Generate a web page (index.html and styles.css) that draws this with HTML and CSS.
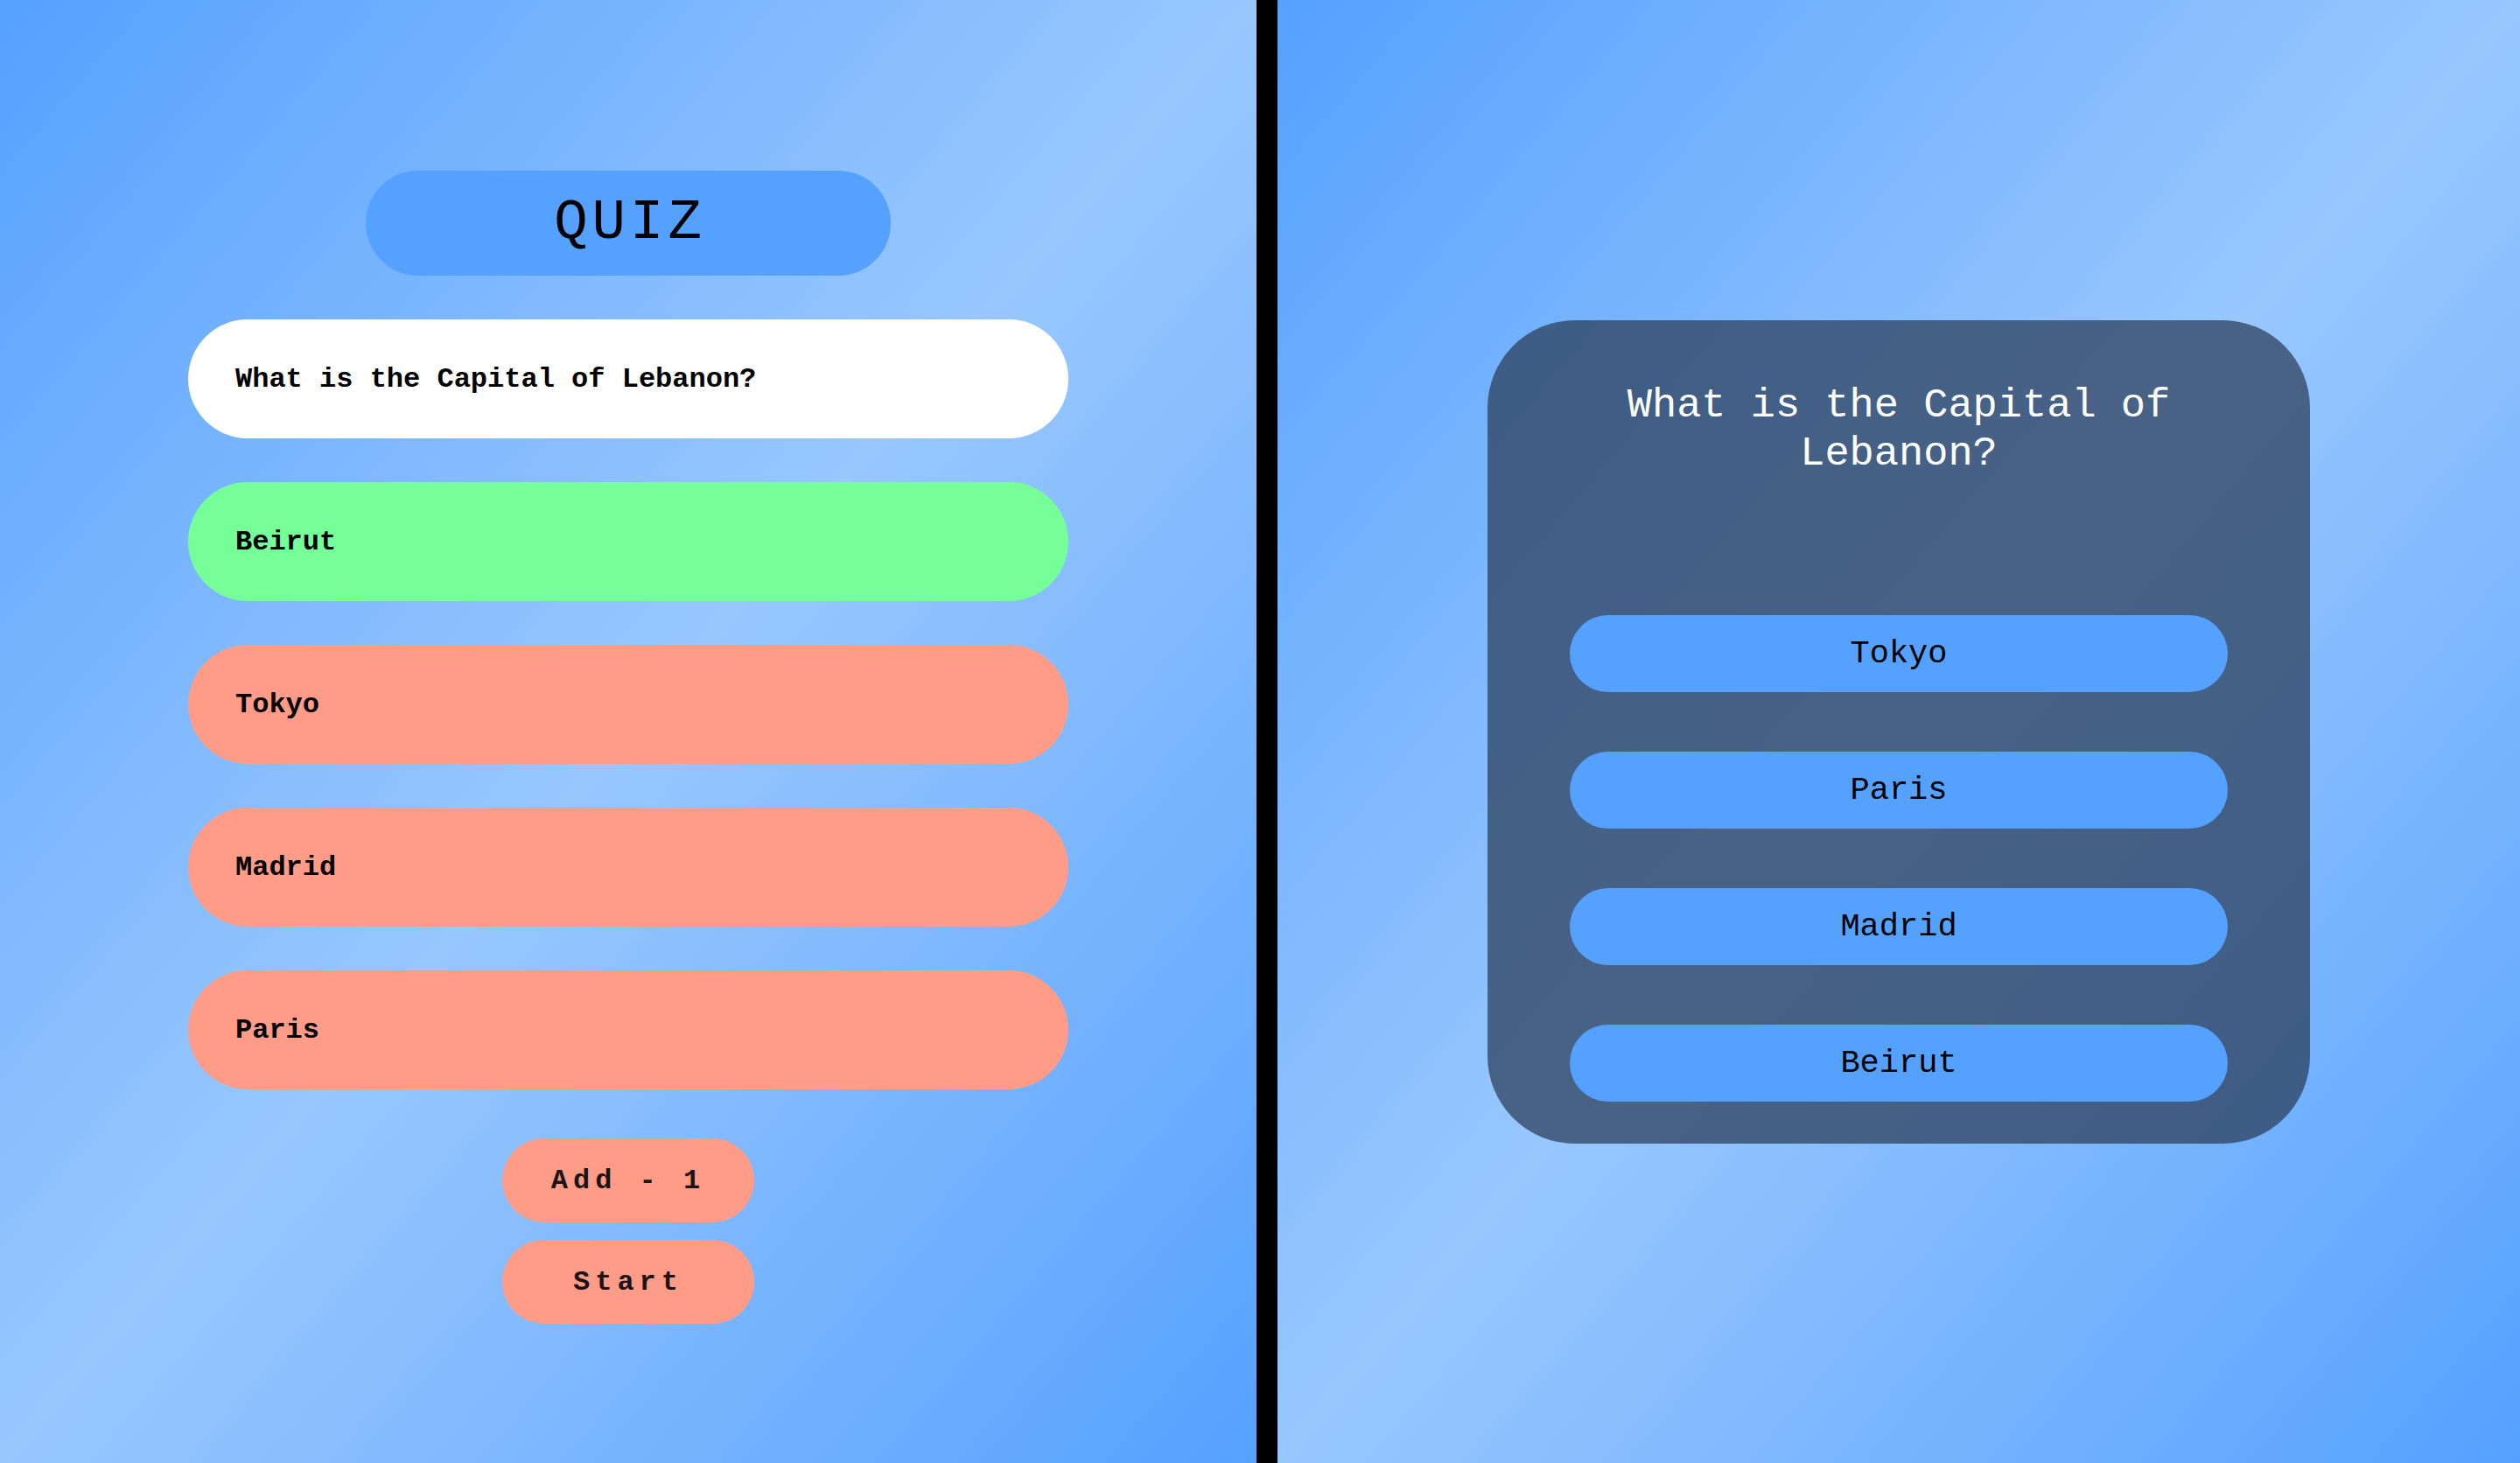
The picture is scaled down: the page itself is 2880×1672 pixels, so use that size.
FILE: index.html
```html
<!DOCTYPE html>
<html lang="en">
<head>
    <meta charset="UTF-8">
    <meta name="viewport" content="width=device-width, initial-scale=1.0">
    <title>Quiz Maker</title>
    <link rel="stylesheet" href="styles.css">
</head>
<body>
    <div class="app">
        <section class="editor">
            <div class="quiz-title">QUIZ</div>
            <div class="field question-field">What is the Capital of Lebanon?</div>
            <div class="field answer-field correct">Beirut</div>
            <div class="field answer-field wrong">Tokyo</div>
            <div class="field answer-field wrong">Madrid</div>
            <div class="field answer-field wrong">Paris</div>
            <div class="editor-actions">
                <button class="action-btn">Add - 1</button>
                <button class="action-btn">Start</button>
            </div>
        </section>
        <div class="divider"></div>
        <section class="preview">
            <div class="quiz-card">
                <h2 class="card-question">What is the Capital of Lebanon?</h2>
                <div class="card-answers">
                    <button class="card-answer">Tokyo</button>
                    <button class="card-answer">Paris</button>
                    <button class="card-answer">Madrid</button>
                    <button class="card-answer">Beirut</button>
                </div>
            </div>
        </section>
    </div>
</body>
</html>
```

FILE: styles.css
```css
* {
    margin: 0;
    padding: 0;
    box-sizing: border-box;
}
body {
    font-family: 'Courier New', 'Liberation Mono', monospace;
    color: #000000;
    height: 100vh;
    overflow: hidden;
}
.app {
    display: grid;
    grid-template-columns: 1436px 24px 1fr;
    height: 100%;
}
.editor,
.preview {
    background: linear-gradient(to bottom right, #56a1ff, #98c7fe 50%, #56a1ff);
}
.divider {
    background: #000000;
}
/* Left side: the editor */
.editor {
    display: flex;
    flex-direction: column;
    align-items: center;
    gap: 50px;
    padding-top: 195px;
}
.quiz-title {
    width: 600px;
    height: 120px;
    border-radius: 60px;
    background: #55a1ff;
    display: flex;
    align-items: center;
    justify-content: center;
    font-size: 64px;
    letter-spacing: 5px;
    padding-left: 4px;
}
.field {
    width: 1006px;
    height: 136px;
    border-radius: 68px;
    display: flex;
    align-items: center;
    padding-left: 54px;
    font-size: 32px;
    font-weight: 700;
}
.question-field {
    background: #ffffff;
}
.correct {
    background: #76ff98;
}
.wrong {
    background: #ff9c88;
}
.editor-actions {
    display: flex;
    flex-direction: column;
    gap: 20px;
    margin-top: 6px;
}
.action-btn {
    width: 288px;
    height: 96px;
    border: none;
    border-radius: 48px;
    background: #ff9c88;
    font-family: inherit;
    font-size: 32px;
    font-weight: 700;
    letter-spacing: 6px;
    color: #1c1414;
    cursor: pointer;
}
/* Right side: the preview */
.preview {
    display: flex;
    align-items: center;
    justify-content: center;
}
.quiz-card {
    width: 940px;
    height: 941px;
    border-radius: 100px;
    background: rgba(42, 60, 86, 0.72);
    padding: 70px 94px 48px;
    display: flex;
    flex-direction: column;
}
.card-question {
    font-size: 47px;
    font-weight: 400;
    line-height: 55px;
    color: #ffffff;
    text-align: center;
}
.card-answers {
    display: flex;
    flex-direction: column;
    gap: 68px;
    margin-top: auto;
}
.card-answer {
    height: 88px;
    border: none;
    border-radius: 44px;
    background: #55a1ff;
    font-family: inherit;
    font-size: 37px;
    color: #000000;
    cursor: pointer;
}
```
